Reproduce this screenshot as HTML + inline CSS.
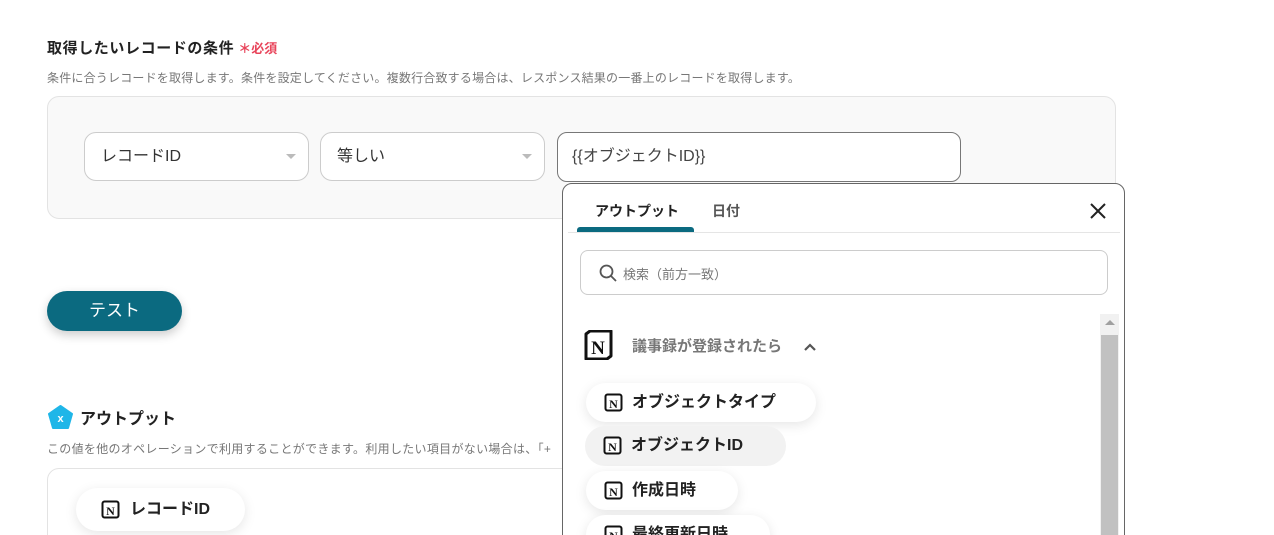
<!DOCTYPE html>
<html><head><meta charset="utf-8"><style>
*{box-sizing:border-box;margin:0;padding:0}
html,body{width:1274px;height:535px;overflow:hidden}
body{background:#fff;font-family:"Liberation Sans","Noto Sans CJK JP",sans-serif;color:#333;position:relative}
.a{position:absolute}
.sel{position:absolute;top:132px;height:49px;border:1px solid #ccc;border-radius:12px;background:#fff;font-size:16px;padding:0 0 0 16px;line-height:47px;color:#333}
.sel:after{content:"";position:absolute;right:12px;top:21px;border:5px solid transparent;border-top:5px solid #bbb}
.chip{position:absolute;height:39px;border-radius:20px;background:#fff;box-shadow:0 3px 12px rgba(0,0,0,.1);font-size:16px;font-weight:bold;color:#222;line-height:39px;padding-left:46px}
.chip svg{position:absolute;left:18px;top:10px}
</style></head><body>
<div class="a" style="left:47px;top:37px;font-size:15px;font-weight:bold;color:#222;letter-spacing:.6px">取得したいレコードの条件<span style="color:#e8445a;font-size:13px;margin-left:4px;letter-spacing:0">＊必須</span></div>
<div class="a" style="left:47px;top:69px;font-size:12px;color:#777;letter-spacing:.2px;white-space:nowrap">条件に合うレコードを取得します。条件を設定してください。複数行合致する場合は、レスポンス結果の一番上のレコードを取得します。</div>
<div class="a" style="left:47px;top:96px;width:1069px;height:123px;background:#f9f9f9;border:1px solid #e3e3e3;border-radius:12px"></div>
<div class="sel" style="left:84px;width:225px">レコードID</div>
<div class="sel" style="left:320px;width:225px">等しい</div>
<div class="a" style="left:557px;top:132px;width:404px;height:50px;border:1px solid #777;border-radius:10px;background:#fff;font-size:16px;line-height:48px;padding-left:14px;color:#444">{{オブジェクトID}}</div>
<div class="a" style="left:47px;top:291px;width:135px;height:40px;border-radius:20px;background:#0b6a80;color:#fff;font-size:17px;text-align:center;line-height:40px;box-shadow:0 4px 10px rgba(0,0,0,.2)">テスト</div>
<svg class="a" style="left:48px;top:405px" width="25" height="24" viewBox="0 0 25 24"><polygon points="12.5,1 24,9 20,23 5,23 1,9" fill="#1fb6e8" stroke="#1fb6e8" stroke-linejoin="round" stroke-width="2"/><text x="12.5" y="17" font-size="11" fill="#fff" text-anchor="middle" font-family="Liberation Sans" font-weight="bold">x</text></svg>
<div class="a" style="left:80px;top:405px;font-size:16px;font-weight:bold;color:#222">アウトプット</div>
<div class="a" style="left:47px;top:440px;font-size:12px;color:#777;white-space:nowrap;letter-spacing:.3px">この値を他のオペレーションで利用することができます。利用したい項目がない場合は、「+</div>
<div class="a" style="left:47px;top:468px;width:1069px;height:100px;border:1px solid #e3e3e3;border-radius:12px"></div>
<div class="chip" style="left:76px;top:488px;width:169px;height:43px;line-height:43px;border-radius:22px;padding-left:54px"><svg style="left:25px;top:12px" width="19" height="19" viewBox="0 0 19 19"><rect x="1.5" y="1.5" width="16" height="16" rx="2" fill="#fff" stroke="#111" stroke-width="2"/><text x="9.5" y="15" font-size="12" font-weight="bold" text-anchor="middle" font-family="Liberation Serif" fill="#111">N</text></svg>レコードID</div>

<div class="a" style="left:562px;top:183px;width:563px;height:370px;border:1px solid #666;border-radius:10px;background:#fff;overflow:hidden">
 <div class="a" style="left:32px;top:17px;font-size:14px;font-weight:bold;color:#222">アウトプット</div>
 <div class="a" style="left:149px;top:17px;font-size:14px;color:#555;font-weight:bold">日付</div>
 <div class="a" style="left:14px;top:43px;width:117px;height:5px;background:#0b6a80;border-radius:3px 3px 0 0"></div>
 <div class="a" style="left:5px;top:48px;width:552px;height:1px;background:#e5e5e5"></div>
 <svg class="a" style="left:526px;top:18px" width="18" height="18" viewBox="0 0 18 18"><path d="M2 2L16 16M16 2L2 16" stroke="#222" stroke-width="2"/></svg>
 <div class="a" style="left:17px;top:66px;width:528px;height:45px;border:1px solid #ccc;border-radius:8px"></div>
 <svg class="a" style="left:36px;top:80px" width="18" height="18" viewBox="0 0 18 18"><circle cx="7.5" cy="7.5" r="6" fill="none" stroke="#555" stroke-width="1.8"/><path d="M12 12L17 17" stroke="#555" stroke-width="1.8"/></svg>
 <div class="a" style="left:60px;top:80px;font-size:13px;color:#777">検索（前方一致）</div>
 <div class="a" style="left:537px;top:130px;width:19px;height:240px;background:#f1f1f1"></div>
 <div class="a" style="left:542px;top:136px;border:5px solid transparent;border-bottom:5px solid #a0a0a0;border-top:0"></div>
 <div class="a" style="left:538px;top:151px;width:17px;height:230px;background:#c1c1c1"></div>
 <svg class="a" style="left:20px;top:146px" width="30" height="30" viewBox="0 0 30 30"><path d="M3 4L7 1H28V26L24 29H3Z" fill="#fff" stroke="#111" stroke-width="3" stroke-linejoin="round"/><text x="15" y="24" font-size="19" font-weight="bold" text-anchor="middle" font-family="Liberation Serif" fill="#111">N</text></svg>
 <div class="a" style="left:69px;top:151px;font-size:15px;font-weight:bold;color:#777">議事録が登録されたら</div>
 <svg class="a" style="left:240px;top:158px" width="14" height="10" viewBox="0 0 14 10"><path d="M2 8L7 3L12 8" fill="none" stroke="#555" stroke-width="2.2"/></svg>
</div>
<div class="chip" style="left:586px;top:383px;width:230px"><svg width="19" height="19" viewBox="0 0 19 19"><rect x="1.5" y="1.5" width="16" height="16" rx="2" fill="#fff" stroke="#111" stroke-width="2"/><text x="9.5" y="15" font-size="12" font-weight="bold" text-anchor="middle" font-family="Liberation Serif" fill="#111">N</text></svg>オブジェクトタイプ</div>
<div class="chip" style="left:585px;top:426px;width:201px;height:40px;background:#f2f2f2;box-shadow:none"><svg width="19" height="19" viewBox="0 0 19 19"><rect x="1.5" y="1.5" width="16" height="16" rx="2" fill="#fff" stroke="#111" stroke-width="2"/><text x="9.5" y="15" font-size="12" font-weight="bold" text-anchor="middle" font-family="Liberation Serif" fill="#111">N</text></svg>オブジェクトID</div>
<div class="chip" style="left:586px;top:471px;width:152px"><svg width="19" height="19" viewBox="0 0 19 19"><rect x="1.5" y="1.5" width="16" height="16" rx="2" fill="#fff" stroke="#111" stroke-width="2"/><text x="9.5" y="15" font-size="12" font-weight="bold" text-anchor="middle" font-family="Liberation Serif" fill="#111">N</text></svg>作成日時</div>
<div class="chip" style="left:586px;top:515px;width:184px"><svg width="19" height="19" viewBox="0 0 19 19"><rect x="1.5" y="1.5" width="16" height="16" rx="2" fill="#fff" stroke="#111" stroke-width="2"/><text x="9.5" y="15" font-size="12" font-weight="bold" text-anchor="middle" font-family="Liberation Serif" fill="#111">N</text></svg>最終更新日時</div>
</body></html>
